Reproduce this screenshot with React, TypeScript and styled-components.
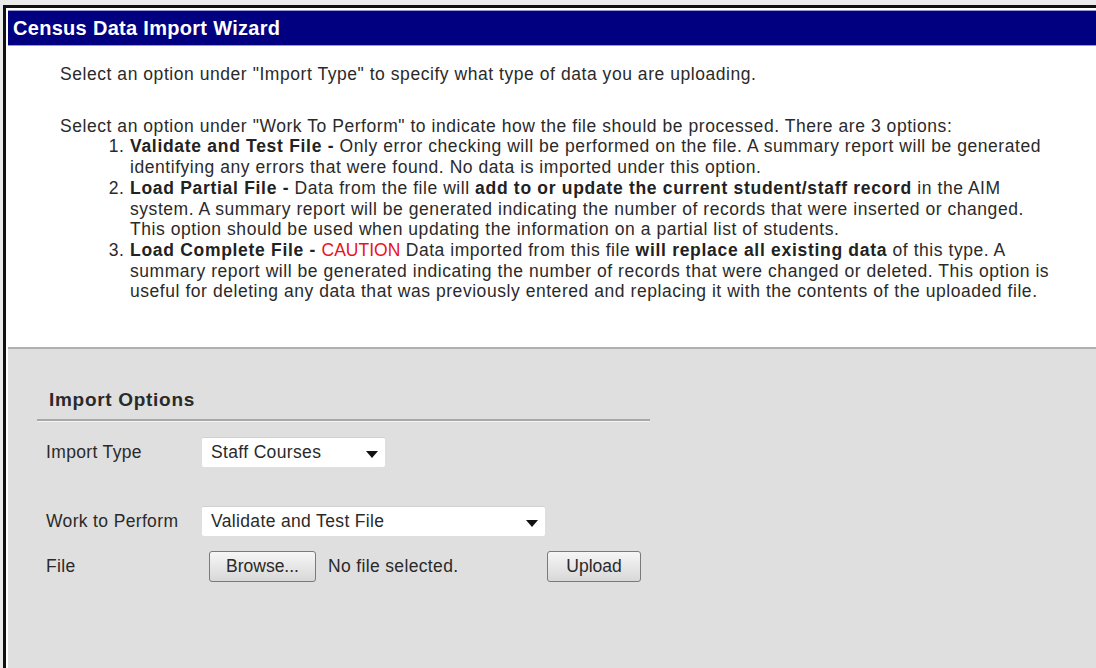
import React from "react";
import styled, { createGlobalStyle } from "styled-components";

const GlobalStyle = createGlobalStyle`
  html, body {
    margin: 0;
    padding: 0;
    background: #ebebeb;
  }
  body {
    font-family: "Liberation Sans", Arial, sans-serif;
    color: #222;
  }
`;

const App = () => {
  return (
    <>
      <GlobalStyle />
      <Page>
        <Wizard>
          <TitleBar>Census Data Import Wizard</TitleBar>
          <Intro>
            <Para>
              Select an option under "Import Type" to specify what type of data
              you are uploading.
            </Para>
            <Para>
              Select an option under "Work To Perform" to indicate how the file
              should be processed. There are 3 options:
            </Para>
            <Steps>
              <li>
                <b>Validate and Test File -</b> Only error checking will be
                performed on the file. A summary report will be generated
                <br />
                identifying any errors that were found. No data is imported
                under this option.
              </li>
              <li>
                <b>Load Partial File -</b> Data from the file will{" "}
                <b>add to or update the current student/staff record</b> in the
                AIM
                <br />
                system. A summary report will be generated indicating the number
                of records that were inserted or changed.
                <br />
                This option should be used when updating the information on a
                partial list of students.
              </li>
              <li>
                <b>Load Complete File -</b> <Caution>CAUTION</Caution> Data
                imported from this file <b>will replace all existing data</b> of
                this type. A
                <br />
                summary report will be generated indicating the number of
                records that were changed or deleted. This option is
                <br />
                useful for deleting any data that was previously entered and
                replacing it with the contents of the uploaded file.
              </li>
            </Steps>
          </Intro>
          <FormArea>
            <Fieldset>
              <Legend>Import Options</Legend>
              <Row gap="39px">
                <Label>Import Type</Label>
                <Select width="183px">
                  <span>Staff Courses</span>
                  <Arrow />
                </Select>
              </Row>
              <Row gap="15px">
                <Label>Work to Perform</Label>
                <Select width="343px">
                  <span>Validate and Test File</span>
                  <Arrow />
                </Select>
              </Row>
              <Row>
                <Label>File</Label>
                <FileField>
                  <Button>Browse...</Button>
                  <FileName>No file selected.</FileName>
                </FileField>
                <Button wide>Upload</Button>
              </Row>
            </Fieldset>
          </FormArea>
        </Wizard>
      </Page>
    </>
  );
};
export default App;

const Page = styled.div`
  width: 1096px;
  height: 668px;
  padding: 5px 0 0 3px;
  box-sizing: border-box;
  overflow: hidden;
`;

const Wizard = styled.div`
  height: 100%;
  border-top: 3px solid #111;
  border-left: 3px solid #111;
  background: #fff;
  padding: 2px 0 0 2px;
  box-sizing: border-box;
  display: flex;
  flex-direction: column;
`;

const TitleBar = styled.div`
  height: 34px;
  background: #000080;
  border-top: 1px solid #9a9ad0;
  border-bottom: 1px solid #9a9ad0;
  color: #fff;
  font-size: 20px;
  font-weight: bold;
  letter-spacing: 0.3px;
  display: flex;
  align-items: center;
  padding-left: 5px;
`;

const Intro = styled.div`
  padding: 18px 4px 45px 52px;
  font-size: 17.5px;
  letter-spacing: 0.55px;
  line-height: 20.7px;
  white-space: nowrap;
  color: #2a2a2a;
  border-bottom: 2px solid #b0b0b0;

  b {
    letter-spacing: 0.7px;
    color: #222;
  }
`;

const Para = styled.p`
  margin: 0 0 31px 0;

  &:nth-of-type(2) {
    margin-bottom: 0;
  }
`;

const Steps = styled.ol`
  margin: 0;
  padding-left: 70px;

  li::marker {
    letter-spacing: 0.6px;
  }
`;

const Caution = styled.span`
  color: #e8141b;
  letter-spacing: 0;
`;

const FormArea = styled.div`
  flex: 1;
  background: #dfdfdf;
  padding: 40px 0 0 29px;
`;

const Fieldset = styled.div`
  width: 613px;
  font-size: 17.5px;
  letter-spacing: 0.35px;
  color: #2a2a2a;
`;

const Legend = styled.div`
  font-size: 19px;
  font-weight: bold;
  letter-spacing: 0.7px;
  padding: 0 0 8px 12px;
  border-bottom: 2px solid #a8a8a8;
  box-shadow: 0 1px 0 #f2f2f2;
  margin-bottom: 16px;
`;

const Row = styled.div<{ gap?: string }>`
  display: flex;
  align-items: center;
  padding-left: 9px;
  margin-bottom: ${(p) => p.gap || "0"};
`;

const Label = styled.div`
  width: 156px;
  flex-shrink: 0;
`;

const Select = styled.div<{ width: string }>`
  width: ${(p) => p.width};
  height: 30px;
  background: #fff;
  border-top: 1px solid #d0d0d0;
  border-radius: 2px;
  display: flex;
  align-items: center;
  justify-content: space-between;
  padding: 0 7px 0 9px;
  box-sizing: border-box;
`;

const Arrow = styled.span`
  width: 0;
  height: 0;
  margin-top: 4px;
  border-left: 6px solid transparent;
  border-right: 6px solid transparent;
  border-top: 7px solid #111;
`;

const FileField = styled.div`
  display: flex;
  align-items: center;
  width: 345px;
  padding-left: 7px;
  box-sizing: border-box;
`;

const Button = styled.div<{ wide?: boolean }>`
  height: 31px;
  width: ${(p) => (p.wide ? "94px" : "107px")};
  box-sizing: border-box;
  border: 1px solid #7a7a7a;
  border-radius: 3px;
  background: linear-gradient(#f6f6f6, #d8d8d8);
  display: flex;
  align-items: center;
  justify-content: center;
  font-size: 17.5px;
  letter-spacing: 0;
`;

const FileName = styled.span`
  margin-left: 12px;
`;
